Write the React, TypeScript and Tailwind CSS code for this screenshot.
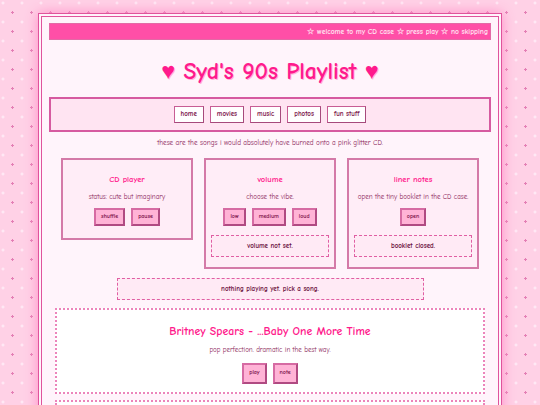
import { useState } from 'react';

const font = "font-['Comic_Sans_MS','Comic_Neue','Chalkboard_SE',cursive]";

function PinkButton({ label, tall }: { label: string; tall?: boolean }) {
  return (
    <span
      className={`${tall ? 'h-[21px]' : 'h-[18px]'} px-[5px] flex items-center bg-[#ffb3d6] border-2 border-[#d66ba3] border-r-[#b04a82] border-b-[#b04a82] text-[6px] font-bold text-[#7a1048] leading-none`}
    >
      {label}
    </span>
  );
}

function StatusBox({ text }: { text: string }) {
  return (
    <div className="mt-[9px] mx-[5px] h-[22px] flex items-center justify-center border-[1.5px] border-dashed border-[#e05fa3] bg-[#ffeaf5] text-[7px] font-bold text-[#6b1040]">
      {text}
    </div>
  );
}

export default function App() {
  const [nav] = useState(['home', 'movies', 'music', 'photos', 'fun stuff']);

  return (
    <div
      className={`min-h-[405px] pt-[13px] bg-[#ffd1e6] bg-[image:radial-gradient(#e47fb5_1px,transparent_1.3px),radial-gradient(#fff0f8_1px,transparent_1.3px)] bg-[size:19px_19px] bg-[position:3px_3px,12.5px_12.5px] ${font}`}
    >
      <div className="mx-auto w-[464px] border-4 border-double border-[#e0539c] bg-[#fff4fb] shadow-[0_0_12px_#ff8cc6] px-[7px] pt-[6px] pb-[10px]">
        <div className="h-[17px] bg-[#ff4fa7] border border-[#e36aa6] flex items-center justify-end pr-[2px] text-[7.5px] font-bold text-[#ffe3f1]">
          ☆ welcome to my CD case ☆ press play ☆ no skipping
        </div>

        <h1 className="mt-[16px] text-center text-[23.5px] leading-[32px] font-bold text-[#ff1a8c] [text-shadow:1px_1px_0_#ffb3d9]">
          ♥ Syd's 90s Playlist ♥
        </h1>

        <div className="mt-[9px] h-[35px] border-2 border-[#d65aa0] bg-[#ffe4f2] flex items-center justify-center gap-[6px]">
          {nav.map((n) => (
            <span
              key={n}
              className="h-[17px] px-[6px] flex items-center bg-white border border-[#c75d94] border-r-[#a64a7c] border-b-[#a64a7c] text-[7px] font-bold text-[#7a1048]"
            >
              {n}
            </span>
          ))}
        </div>

        <p className="mt-[6px] text-center text-[7.2px] text-[#8c1f5a]">
          these are the songs i would absolutely have burned onto a pink glitter CD.
        </p>

        <div className="mt-[9px] mx-[12px] grid grid-cols-3 gap-[11px] items-start">
          <div className="border-2 border-[#d47aa8] bg-[#ffedf7] pt-[12px] pb-[12px] text-center">
            <h2 className="text-[8.5px] leading-[14px] font-bold text-[#ff1a8c]">CD player</h2>
            <p className="mt-[6px] text-[7px] text-[#8c1f5a]">status: cute but imaginary</p>
            <div className="mt-[6px] flex justify-center gap-[6px]">
              <PinkButton label="shuffle" />
              <PinkButton label="pause" />
            </div>
          </div>

          <div className="border-2 border-[#d47aa8] bg-[#ffedf7] pt-[12px] pb-[10px] text-center">
            <h2 className="text-[8.5px] leading-[14px] font-bold text-[#ff1a8c]">volume</h2>
            <p className="mt-[6px] text-[7px] text-[#8c1f5a]">choose the vibe.</p>
            <div className="mt-[6px] flex justify-center gap-[6px]">
              <PinkButton label="low" />
              <PinkButton label="medium" />
              <PinkButton label="loud" />
            </div>
            <StatusBox text="volume not set." />
          </div>

          <div className="border-2 border-[#d47aa8] bg-[#ffedf7] pt-[12px] pb-[10px] text-center">
            <h2 className="text-[8.5px] leading-[14px] font-bold text-[#ff1a8c]">liner notes</h2>
            <p className="mt-[6px] text-[7px] text-[#8c1f5a]">open the tiny booklet in the CD case.</p>
            <div className="mt-[6px] flex justify-center gap-[6px]">
              <PinkButton label="open" />
            </div>
            <StatusBox text="booklet closed." />
          </div>
        </div>

        <div className="mt-[9px] mx-auto w-[307px] h-[22px] flex items-center justify-center border-[1.5px] border-dashed border-[#e05fa3] bg-[#ffeaf5] text-[7px] font-bold text-[#6b1040]">
          nothing playing yet. pick a song.
        </div>

        <div className="mt-[8px] mx-[6px] border-2 border-dotted border-[#ec84bb] bg-white pt-[12px] pb-[8px] text-center">
          <h3 className="text-[11.8px] leading-[18px] font-bold text-[#ff1a8c]">Britney Spears - ...Baby One More Time</h3>
          <p className="mt-[5px] text-[7px] text-[#8c1f5a]">pop perfection. dramatic in the best way.</p>
          <div className="mt-[7px] flex justify-center gap-[6px]">
            <PinkButton label="play" tall />
            <PinkButton label="note" tall />
          </div>
        </div>

        <div className="mt-[6px] mx-[6px] h-[60px] border-2 border-dotted border-[#ec84bb] bg-white" />
      </div>
    </div>
  );
}
